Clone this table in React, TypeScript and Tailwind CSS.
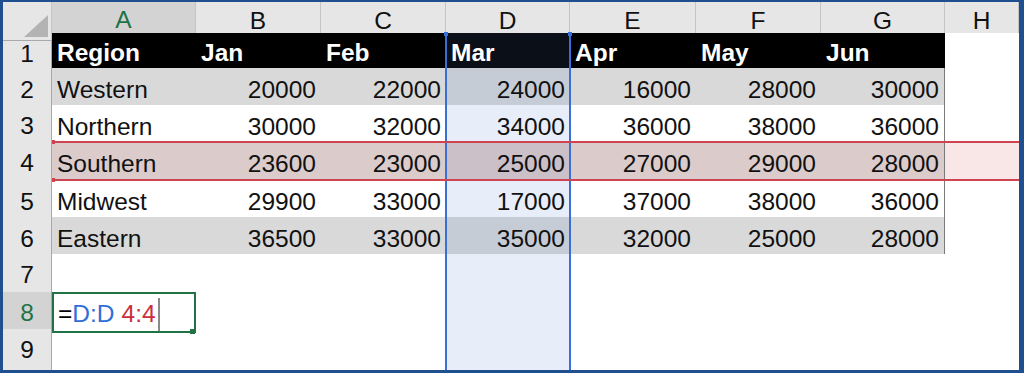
import React from "react";

const COLS =
  "grid grid-cols-[49px_144px_125px_125px_124px_126px_125px_124px_1fr]";

const letters = ["A", "B", "C", "D", "E", "F", "G", "H"];

const rows: (string | number)[][] = [
  ["Region", "Jan", "Feb", "Mar", "Apr", "May", "Jun"],
  ["Western", 20000, 22000, 24000, 16000, 28000, 30000],
  ["Northern", 30000, 32000, 34000, 36000, 38000, 36000],
  ["Southern", 23600, 23000, 25000, 27000, 29000, 28000],
  ["Midwest", 29900, 33000, 17000, 37000, 38000, 36000],
  ["Eastern", 36500, 33000, 35000, 32000, 25000, 28000],
  [],
  [],
  [],
];

const heights = [
  "h-[35px]",
  "h-[37px]",
  "h-[37px]",
  "h-[38px]",
  "h-[37px]",
  "h-[37px]",
  "h-[38px]",
  "h-[37px]",
  "h-[37px]",
];

// cell fill, D column is selected and row 4 is highlighted
const cellBg = (r: number, c: number) => {
  if (r === 4) {
    if (c === 3) return "bg-[#cbbfc8]";
    if (c <= 6) return "bg-[#dbcbcb]";
    return "bg-[#f9e6e7]";
  }
  if (r === 1) {
    if (c === 3) return "bg-[#0a0f18]";
    if (c <= 6) return "bg-black";
    return "bg-white";
  }
  if (r === 2 || r === 6) {
    if (c === 3) return "bg-[#c6ccd6]";
    if (c <= 6) return "bg-[#d9d9d9]";
    return "bg-white";
  }
  return c === 3 ? "bg-[#e8eef9]" : "bg-white";
};

const cellBorder = (r: number, c: number) => {
  if (c > 6 || r < 2 || r > 6) return "";
  const b = r === 2 || r === 5 || r === 6 ? "border-b border-b-[#7a7a7a]" : "";
  const rt = c === 6 ? "border-r border-r-[#7a7a7a]" : "";
  return `${b} ${rt}`;
};

const Formula = () => (
  <>
    <span className="text-black">=</span>
    <span className="text-[#2f6fd6]">D:D</span>
    <span className="text-[#c9303c] ml-[7px]">4:4</span>
    <span className="ml-[2px] w-[2px] h-[33px] bg-[#8a8a8a]" />
    <span className="absolute right-[1px] bottom-[-1px] w-[5px] h-[5px] bg-[#217346]" />
  </>
);

export default function App() {
  return (
    <div className="relative w-[1024px] h-[373px] overflow-hidden bg-white border-l-[3px] border-t-2 border-r-[5px] border-b-[3px] border-[#1f4f8f] font-['Liberation_Sans',Arial,sans-serif] text-[24.5px] text-[#111]">
      {/* column headers */}
      <div className={`${COLS} h-[31px]`}>
        <div className="relative bg-[#e6e6e6] border-r border-r-[#c4c4c4] border-b border-b-[#a9a9a9]">
          <svg className="absolute right-[3px] bottom-[3px]" width="24" height="22">
            <polygon points="24,0 24,22 0,22" fill="#b3b3b3" />
          </svg>
        </div>
        {letters.map((l, i) => (
          <div
            key={l}
            className={`flex items-center justify-center border-r border-r-[#c4c4c4] ${
              i === 0
                ? "bg-[#d3d3d3] text-[#217346] border-b-2 border-b-[#217346]"
                : "bg-[#e6e6e6] border-b border-b-[#a9a9a9]"
            }`}
          >
            {l}
          </div>
        ))}
      </div>

      {/* rows */}
      {heights.map((h, ri) => {
        const r = ri + 1;
        const data = rows[ri];
        return (
          <div key={r} className={`${COLS} ${h}`}>
            <div
              className={`flex items-center justify-center pt-[3px] border-b border-b-[#c4c4c4] border-r border-r-[#a9a9a9] ${
                r === 8 ? "bg-[#d3d3d3] text-[#217346]" : "bg-[#e6e6e6]"
              }`}
            >
              {r}
            </div>
            {letters.map((l, c) => {
              const v = data[c];
              const active = r === 8 && c === 0;
              const left = typeof v === "string" || active;
              return (
                <div
                  key={l}
                  className={`flex items-center ${cellBg(r, c)} ${cellBorder(r, c)} ${
                    r === 1 ? "font-bold text-white pt-0" : "pt-[4px]"
                  } ${left ? "justify-start pl-[5px]" : "justify-end pr-[5px]"} ${
                    active ? "relative pt-0 pl-[6px] shadow-[inset_0_0_0_2px_#217346]" : ""
                  }`}
                >
                  {active ? <Formula /> : v}
                </div>
              );
            })}
          </div>
        );
      })}
      <div className={`${COLS} h-[4px]`}>
        <div className="bg-[#e6e6e6] border-r border-r-[#a9a9a9]" />
        <div className="col-start-5 bg-[#e8eef9]" />
      </div>

      {/* selection outlines drawn over the grid */}
      <div className="absolute left-[442px] top-[32px] w-[2px] h-[340px] bg-[#3a6fd6]" />
      <div className="absolute left-[566px] top-[32px] w-[2px] h-[340px] bg-[#3a6fd6]" />
      <div className="absolute left-[441px] top-[30px] w-[4px] h-[4px] bg-[#3a6fd6]" />
      <div className="absolute left-[565px] top-[30px] w-[4px] h-[4px] bg-[#3a6fd6]" />

      <div className="absolute left-[49px] right-0 top-[139px] h-[2px] bg-[#cf4450]" />
      <div className="absolute left-[49px] right-0 top-[177px] h-[2px] bg-[#cf4450]" />
      <div className="absolute left-[49px] top-[138px] w-[3px] h-[4px] bg-[#cf4450]" />
      <div className="absolute left-[49px] top-[176px] w-[3px] h-[4px] bg-[#cf4450]" />
    </div>
  );
}
